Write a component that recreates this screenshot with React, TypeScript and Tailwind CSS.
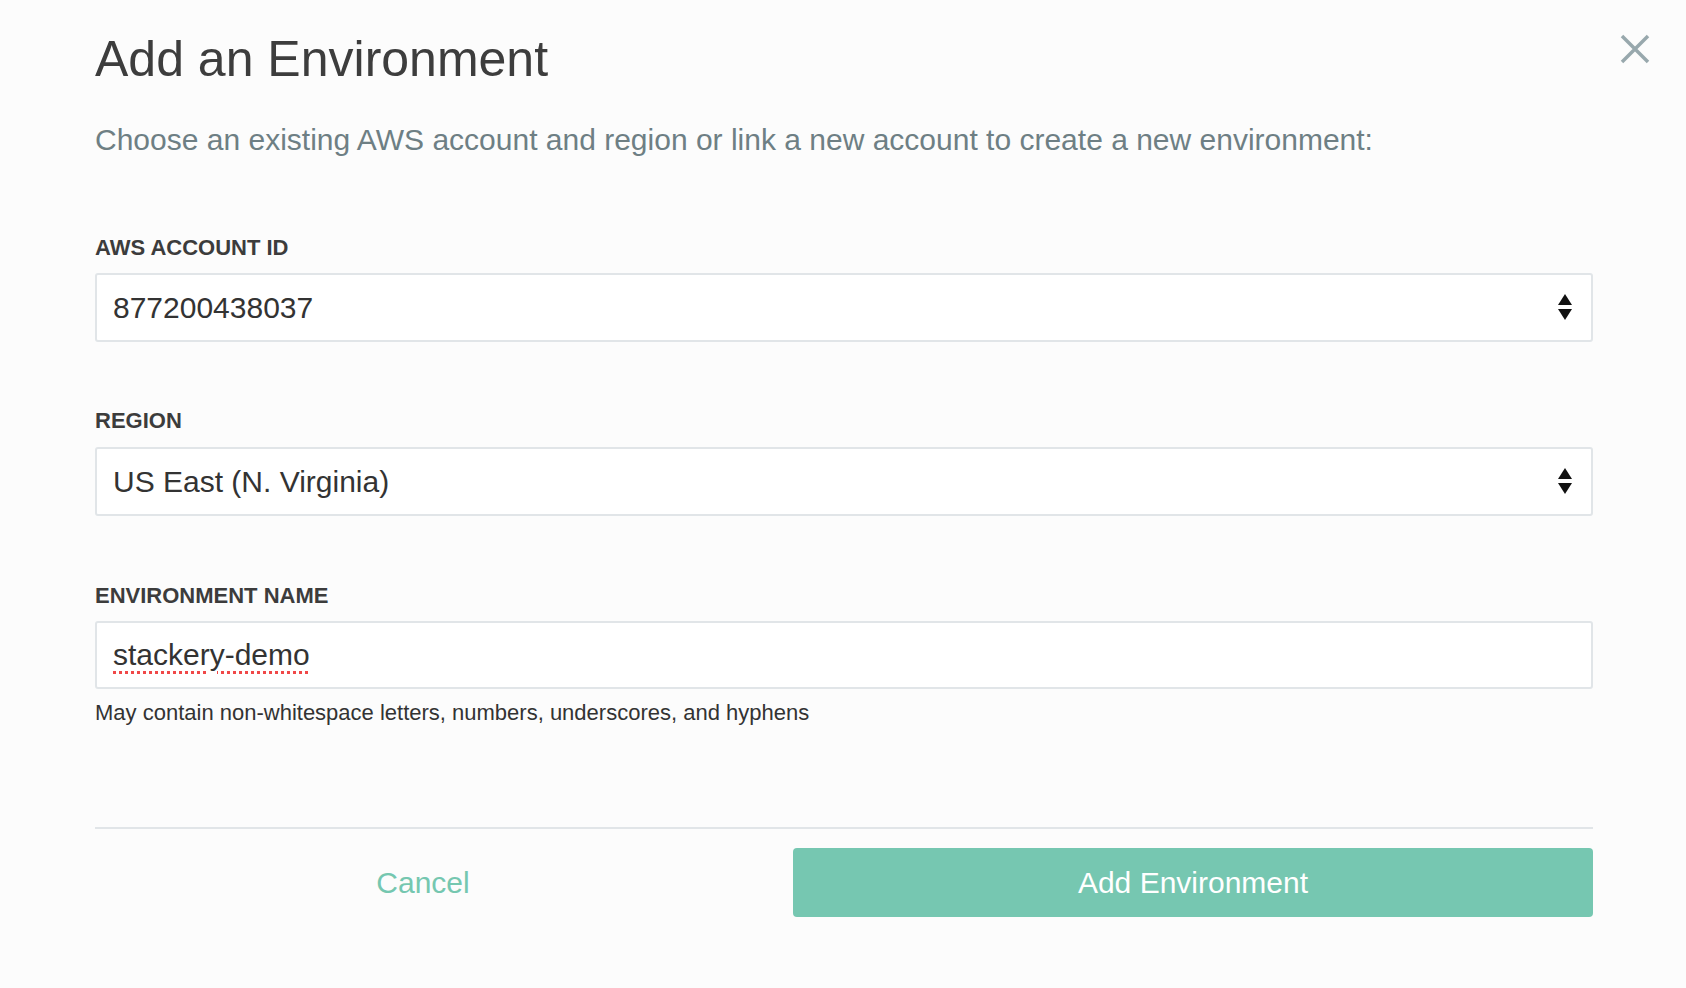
import React from "react";

function Arrows() {
  return (
    <svg width="16" height="28" viewBox="0 0 16 28" className="absolute right-[18px] top-1/2 -translate-y-1/2">
      <polygon points="8,0 15,11 1,11" fill="#111" />
      <polygon points="1,15 15,15 8,26" fill="#111" />
    </svg>
  );
}

function SelectBox({ value }: { value: string }) {
  return (
    <div className="relative h-[69px] w-full rounded-[3px] border-2 border-[#e1e5e8] bg-white flex items-center pl-[16px] text-[30px] text-[#333] leading-none">
      {value}
      <Arrows />
    </div>
  );
}

export default function App() {
  return (
    <div
      className="w-[1686px] h-[988px] bg-[#fcfcfc] relative overflow-hidden"
      style={{ fontFamily: '"Liberation Sans", Arial, sans-serif' }}
    >
      <button className="absolute left-[1620px] top-[34px] w-[30px] h-[30px]">
        <svg viewBox="0 0 30 30" width="30" height="30">
          <path d="M2 2 L28 28 M28 2 L2 28" stroke="#98a8ad" strokeWidth="3.5" strokeLinecap="butt" />
        </svg>
      </button>
      <div className="ml-[95px] w-[1498px] flex flex-col">
        <h1 className="mt-[34px] text-[50px] leading-[50px] text-[#3d3d3d] font-normal">Add an Environment</h1>
        <p className="mt-[40px] text-[30px] leading-[32px] text-[#6e7f84]">
          Choose an existing AWS account and region or link a new account to create a new environment:
        </p>

        <div className="mt-[79px] text-[22px] leading-[26px] font-bold text-[#3c3c3c]">AWS ACCOUNT ID</div>
        <div className="mt-[12px]">
          <SelectBox value="877200438037" />
        </div>

        <div className="mt-[66px] text-[22px] leading-[26px] font-bold text-[#3c3c3c]">REGION</div>
        <div className="mt-[13px]">
          <SelectBox value="US East (N. Virginia)" />
        </div>

        <div className="mt-[67px] text-[22px] leading-[26px] font-bold text-[#3c3c3c]">ENVIRONMENT NAME</div>
        <div className="mt-[12px] h-[68px] w-full rounded-[3px] border-2 border-[#e1e5e8] bg-white flex items-center pl-[16px] text-[30px] text-[#333] leading-none">
          <span className="underline decoration-dotted decoration-[#f04848] decoration-[3px] underline-offset-[6px]">stackery-demo</span>
        </div>
        <div className="mt-[12px] text-[22px] leading-[24px] text-[#333]">
          May contain non-whitespace letters, numbers, underscores, and hyphens
        </div>

        <div className="mt-[102px] h-[2px] w-full bg-[#e1e5e8]" />

        <div className="mt-[19px] flex items-center">
          <button className="w-[656px] h-[69px] text-[30px] text-[#75c7b0]">Cancel</button>
          <button className="ml-auto w-[800px] h-[69px] rounded-[4px] bg-[#76c7b1] text-[30px] text-white">
            Add Environment
          </button>
        </div>
      </div>
    </div>
  );
}
